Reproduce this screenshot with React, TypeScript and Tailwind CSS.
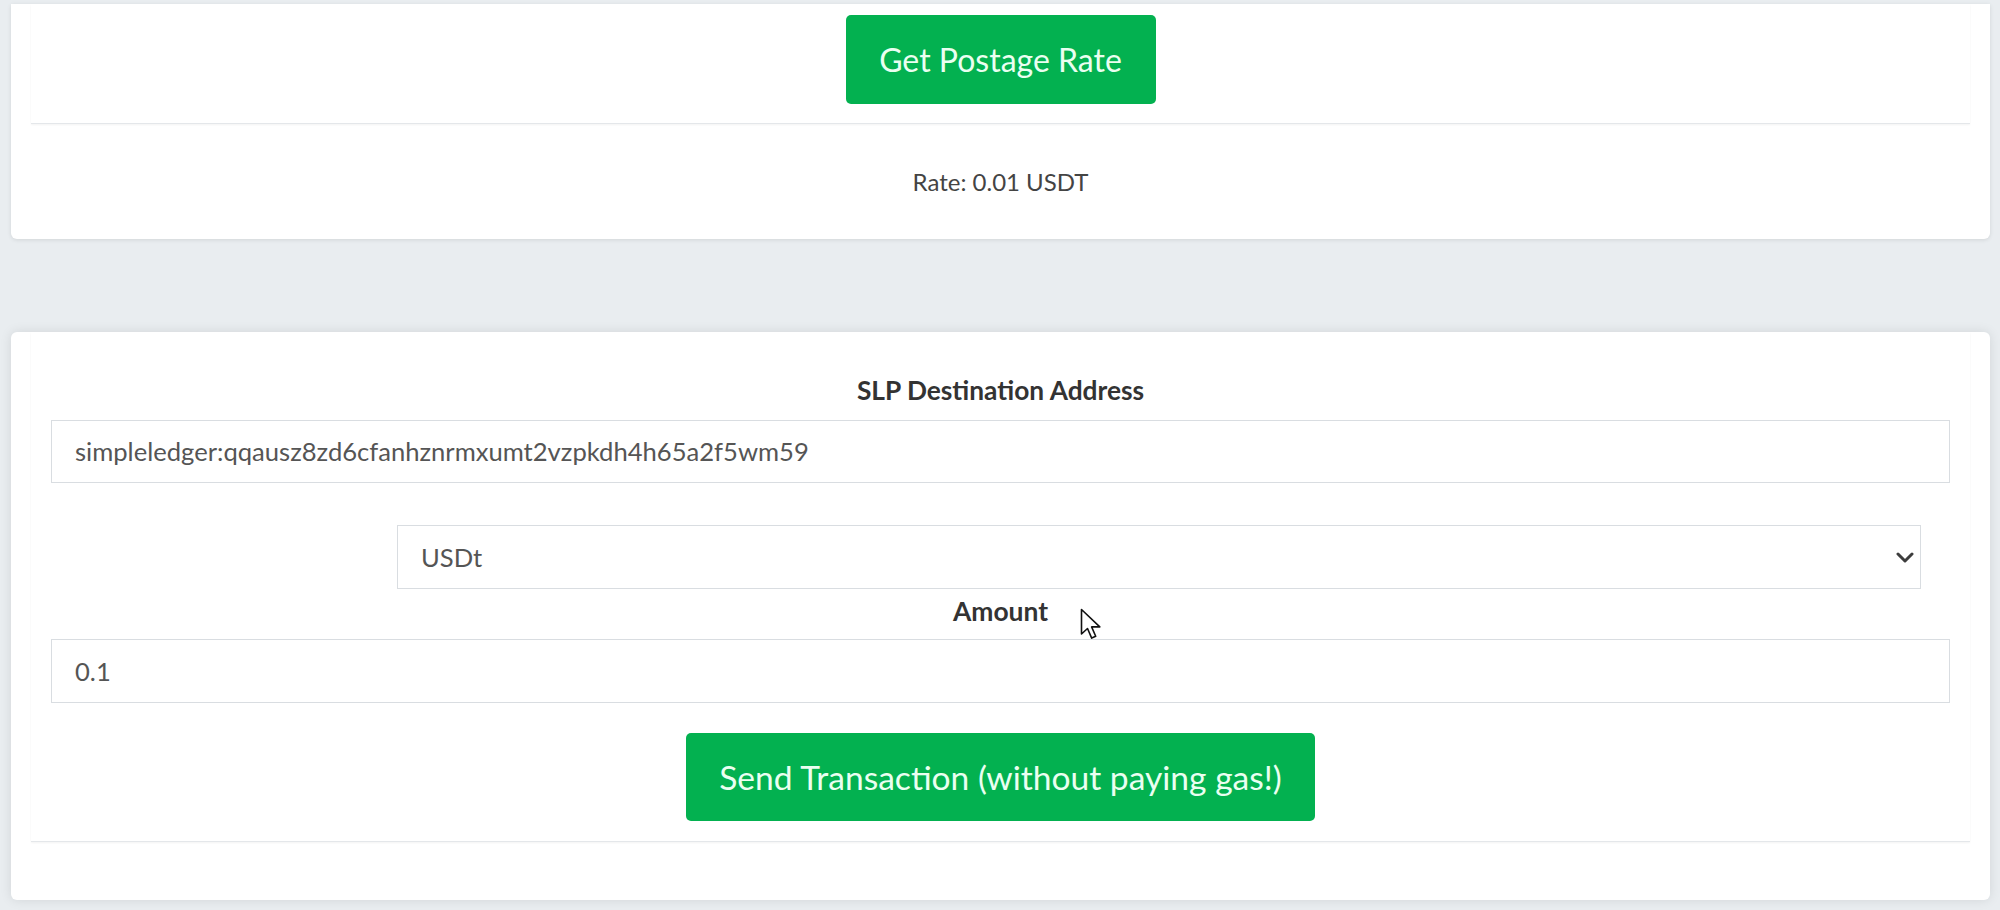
import React from "react";

function Chevron() {
  return (
    <svg width="18" height="11" viewBox="0 0 18 11" fill="none">
      <path d="M2 2l7 7 7-7" stroke="#3d3d3d" strokeWidth="3" strokeLinecap="round" strokeLinejoin="round" />
    </svg>
  );
}

function Pointer() {
  return (
    <svg width="24" height="34" viewBox="0 0 24 34" fill="none">
      <path
        d="M1.5 1.5v24.5l6-5.5 4.2 9.6 4-1.8-4.1-9.4h8.2z"
        fill="#ffffff"
        stroke="#111111"
        strokeWidth="1.6"
        strokeLinejoin="round"
      />
    </svg>
  );
}

export default function App() {
  return (
    <div className="relative min-h-[910px] overflow-hidden bg-[#e9edf0] pl-[11px] pr-[10px] pt-[4px] font-['Lato',sans-serif]">
      {/* postage rate card */}
      <section className="flex h-[235px] flex-col rounded-b-[6px] bg-white px-[20px] shadow-[0_1px_4px_rgba(0,0,0,0.10)]">
        <div className="flex h-[120px] justify-center border-b border-[#e4e7ea] pt-[11px] shadow-[0_1px_2px_rgba(0,0,0,0.05)]">
          <button className="h-[89px] w-[310px] rounded-[5px] bg-[#03b150] text-[32px] text-[#eafff1]">
            Get Postage Rate
          </button>
        </div>
        <div className="flex flex-1 items-center justify-center text-[24px] text-[#444]">
          Rate: 0.01 USDT
        </div>
      </section>

      {/* transfer card */}
      <section className="mt-[93px] h-[568px] rounded-[6px] bg-white px-[20px] shadow-[0_0_12px_rgba(0,0,0,0.10)]">
        <div className="flex h-[510px] flex-col border-b border-[#e4e7ea] px-[20px] pt-[43px] shadow-[0_1px_2px_rgba(0,0,0,0.05)]">
          <label className="h-[30px] text-center text-[26.3px] font-bold leading-[30px] text-[#333]">
            SLP Destination Address
          </label>
          <div className="mt-[15px] flex h-[63px] items-center border border-[#d9dde1] px-[23px] text-[25.6px] text-[#555]">
            simpleledger:qqausz8zd6cfanhznrmxumt2vzpkdh4h65a2f5wm59
          </div>
          <div className="mr-[29px] ml-[346px] mt-[42px] flex h-[64px] items-center justify-between border border-[#d9dde1] pl-[23px] pr-[6px] text-[25.6px] text-[#555]">
            <span>USDt</span>
            <Chevron />
          </div>
          <label className="mt-[7px] h-[30px] text-center text-[26.4px] font-bold leading-[30px] text-[#333]">
            Amount
          </label>
          <div className="mt-[13px] flex h-[64px] items-center border border-[#d9dde1] px-[23px] text-[25.6px] text-[#555]">
            0.1
          </div>
          <div className="mt-[30px] flex justify-center">
            <button className="h-[88px] w-[629px] rounded-[5px] bg-[#03b150] text-[33.6px] text-[#eafff1]">
              Send Transaction (without paying gas!)
            </button>
          </div>
        </div>
      </section>

      <div className="absolute left-[1080px] top-[608px]">
        <Pointer />
      </div>
    </div>
  );
}
